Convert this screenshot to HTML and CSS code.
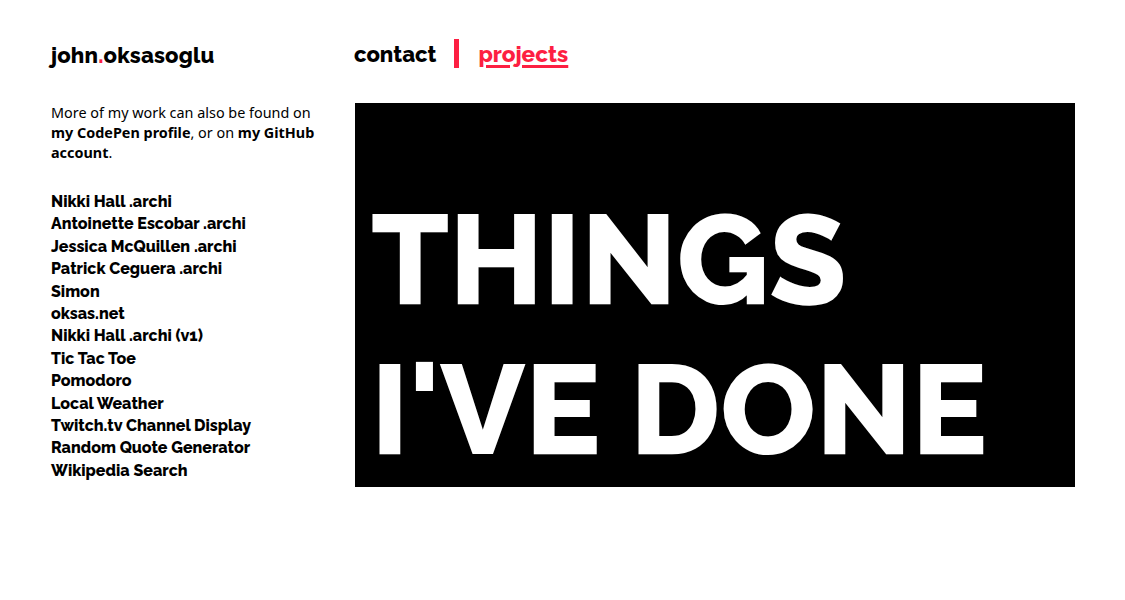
FILE: index.html
```html
<!DOCTYPE html>
<html>
<head>
<meta charset="utf-8">
<link rel="stylesheet" href="styles.css">
</head>
<body>
<div class="page">
  <header class="top">
    <div class="logo">john<span class="dot">.</span>oksasoglu</div>
    <nav class="nav">
      <a class="nav-link">contact</a>
      <span class="bar"></span>
      <a class="nav-link active">projects</a>
    </nav>
  </header>
  <main class="main">
    <aside class="side">
      <p class="intro">More of my work can also be found on <b>my CodePen profile</b>, or on <b>my GitHub account</b>.</p>
      <ul class="list">
        <li>Nikki Hall .archi</li>
        <li>Antoinette Escobar .archi</li>
        <li>Jessica McQuillen .archi</li>
        <li>Patrick Ceguera .archi</li>
        <li>Simon</li>
        <li>oksas.net</li>
        <li>Nikki Hall .archi (v1)</li>
        <li>Tic Tac Toe</li>
        <li>Pomodoro</li>
        <li>Local Weather</li>
        <li>Twitch.tv Channel Display</li>
        <li>Random Quote Generator</li>
        <li>Wikipedia Search</li>
      </ul>
    </aside>
    <section class="hero">
      <h1 class="hero-title">THINGS<br>I'VE DONE</h1>
    </section>
  </main>
</div>
</body>
</html>
```
FILE: styles.css
```css
html, body {
  margin: 0;
  padding: 0;
  background: #fff;
}
.page {
  padding: 38px 0 0 50px;
  font-family: "Raleway", "Lato", sans-serif;
  color: #000;
}
.top {
  display: flex;
  align-items: center;
  height: 30px;
}
.logo {
  width: 304px;
  padding-left: 1px;
  box-sizing: border-box;
  font-size: 22px;
  font-weight: 800;
  letter-spacing: 0.2px;
  position: relative;
  top: 2px;
}
.dot { color: #fd1f42; }
.nav {
  display: flex;
  align-items: center;
}
.nav-link {
  font-size: 22px;
  font-weight: 800;
  color: #000;
  position: relative;
  top: 1px;
}
.nav-link.active {
  color: #fd1f42;
  font-size: 22.5px;
  text-decoration: underline;
  text-decoration-thickness: 3px;
  text-underline-offset: 3px;
}
.bar {
  width: 5px;
  height: 29px;
  background: #fd1f42;
  margin: 0 19px 0 18px;
}
.main {
  display: flex;
  margin-top: 35px;
}
.side {
  width: 305px;
  flex-shrink: 0;
  box-sizing: border-box;
  padding: 0 36px 0 1px;
}
.intro {
  margin: 0;
  font-family: "Noto Sans", sans-serif;
  font-size: 14.4px;
  line-height: 20px;
}
.intro b { font-weight: 700; }
.list {
  list-style: none;
  margin: 28px 0 0;
  padding: 0;
  font-size: 16px;
  font-weight: 800;
  line-height: 22.4px;
}
.hero {
  width: 720px;
  height: 384px;
  background: #000;
  box-sizing: border-box;
  padding: 82px 0 0 16px;
}
.hero-title {
  margin: 0;
  color: #fff;
  font-size: 126px;
  font-weight: 800;
  line-height: 150px;
}
```
